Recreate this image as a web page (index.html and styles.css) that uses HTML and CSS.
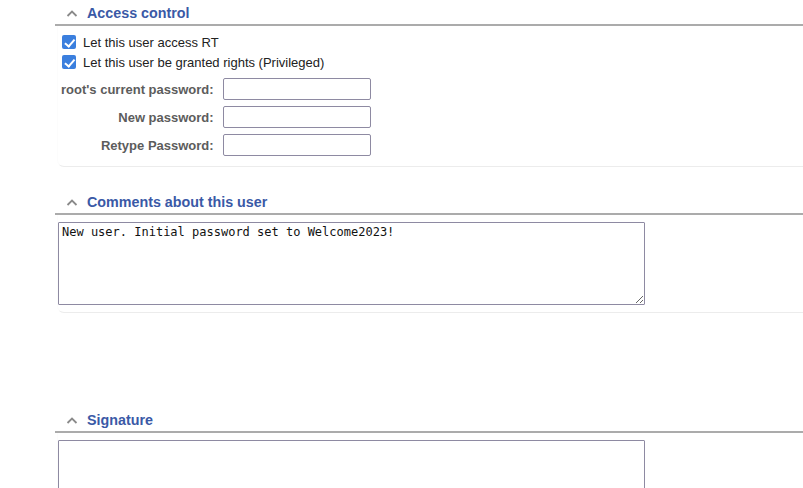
FILE: index.html
```html
<!DOCTYPE html>
<html>
<head>
<meta charset="utf-8">
<link rel="stylesheet" href="styles.css">
</head>
<body>
<main class="page">
  <section class="section">
    <h2 class="section-title">
      <svg class="chev" width="12" height="8" viewBox="0 0 12 8"><polyline points="1.5,7 6,2.5 10.5,7" fill="none" stroke="#8a8a8a" stroke-width="1.8"/></svg>
      <span>Access control</span>
    </h2>
    <div class="box box-access">
      <label class="check-row"><input class="check" type="checkbox" checked><span>Let this user access RT</span></label>
      <label class="check-row"><input class="check" type="checkbox" checked><span>Let this user be granted rights (Privileged)</span></label>
      <div class="form-grid">
        <div class="label">root's current password:</div>
        <input class="field" type="password">
        <div class="label">New password:</div>
        <input class="field" type="password">
        <div class="label">Retype Password:</div>
        <input class="field" type="password">
      </div>
    </div>
  </section>

  <section class="section">
    <h2 class="section-title">
      <svg class="chev" width="12" height="8" viewBox="0 0 12 8"><polyline points="1.5,7 6,2.5 10.5,7" fill="none" stroke="#8a8a8a" stroke-width="1.8"/></svg>
      <span>Comments about this user</span>
    </h2>
    <div class="box box-text">
      <textarea class="area">New user. Initial password set to Welcome2023!</textarea>
    </div>
  </section>

  <section class="section section-sig">
    <h2 class="section-title">
      <svg class="chev" width="12" height="8" viewBox="0 0 12 8"><polyline points="1.5,7 6,2.5 10.5,7" fill="none" stroke="#8a8a8a" stroke-width="1.8"/></svg>
      <span>Signature</span>
    </h2>
    <div class="box box-text">
      <textarea class="area"></textarea>
    </div>
  </section>
</main>
</body>
</html>
```
FILE: styles.css
```css
html, body {
  margin: 0;
  padding: 0;
  background: #fff;
}
body {
  font-family: "Liberation Sans", Arial, sans-serif;
  font-size: 13px;
  color: #222;
}
.page {
  padding-left: 55px;
}
.section + .section {
  margin-top: 22px;
}
.section.section-sig {
  margin-top: 94px;
}
.section-title {
  margin: 0;
  display: flex;
  align-items: center;
  height: 22px;
  padding-top: 2px;
  border-bottom: 2px solid #ababab;
  font-size: 14.3px;
  font-weight: bold;
  line-height: 18px;
  color: #3a59a6;
}
.chev {
  margin-left: 11px;
  margin-right: 9px;
  display: block;
}
.box {
  margin-left: 2px;
  border-bottom: 1px solid #ececec;
  border-left: 1px solid #fcfcfc;
  border-bottom-left-radius: 7px;
}
.box-access {
  padding: 6px 0 10px 0;
}
.check-row {
  display: flex;
  align-items: center;
  height: 20px;
}
.check {
  -webkit-appearance: none;
  appearance: none;
  position: relative;
  box-sizing: border-box;
  margin: 3px 7px 3px 4px;
  width: 14px;
  height: 14px;
  border-radius: 2px;
  background: #3b7fde;
  border: none;
}
.check::after {
  content: "";
  position: absolute;
  left: 4.5px;
  top: 1.5px;
  width: 3.5px;
  height: 7.5px;
  border-right: 2px solid #fff;
  border-bottom: 2px solid #fff;
  transform: rotate(40deg);
}
.form-grid {
  display: grid;
  grid-template-columns: auto 148px;
  column-gap: 9px;
  row-gap: 6px;
  margin-top: 6px;
  padding-left: 3px;
  justify-content: start;
  align-items: center;
}
.label {
  text-align: right;
  font-weight: bold;
  color: #5c5c5c;
}
.field {
  box-sizing: border-box;
  width: 148px;
  height: 22px;
  margin: 0;
  border: 1px solid #8e8aa2;
  border-radius: 2px;
  background: #fff;
}
.box-text {
  padding: 7px 0 7px 0;
}
.area {
  display: block;
  box-sizing: border-box;
  width: 587px;
  height: 83px;
  margin: 0;
  padding: 2px 3px;
  border: 1px solid #8e8aa2;
  border-radius: 1px;
  font-family: "DejaVu Sans Mono", monospace;
  font-size: 12px;
  line-height: 15px;
  color: #111;
  resize: both;
}
```
